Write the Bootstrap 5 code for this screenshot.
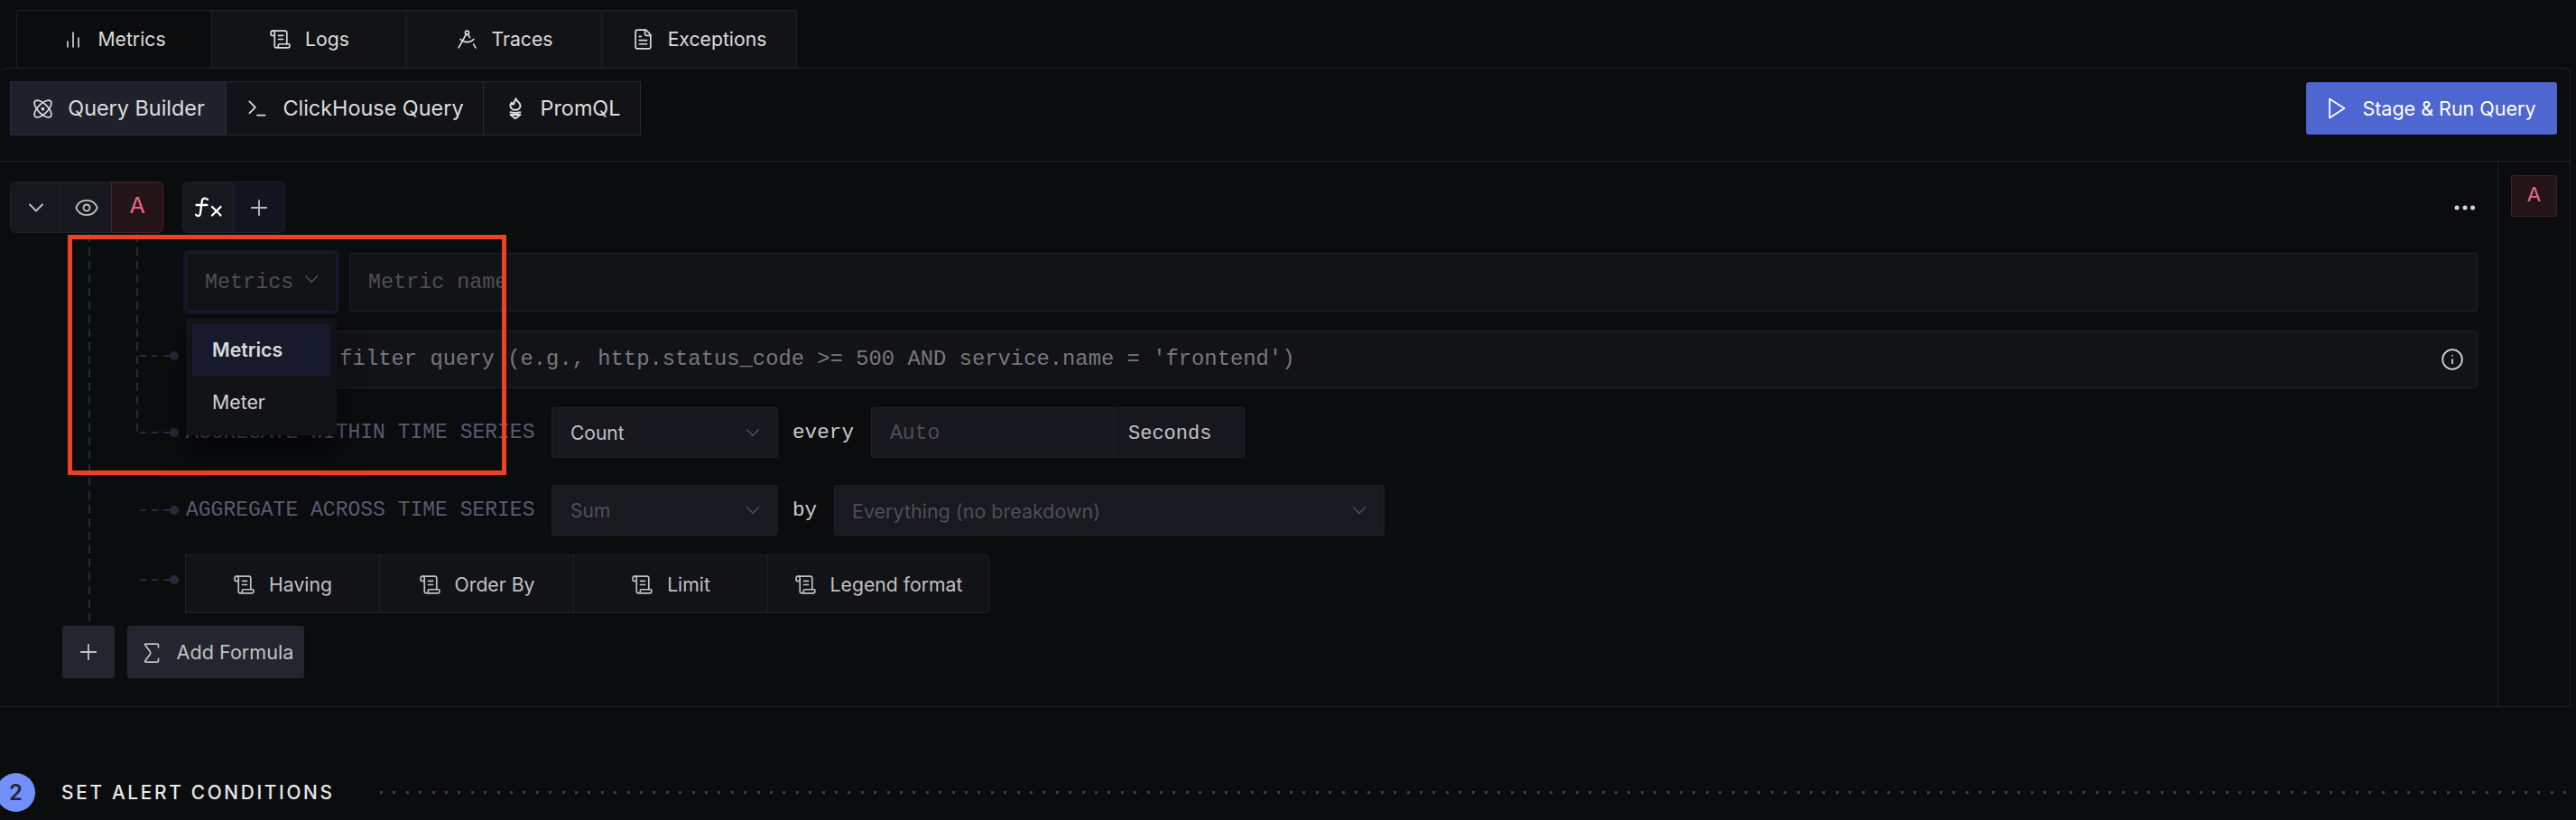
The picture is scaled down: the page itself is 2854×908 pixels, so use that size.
<!DOCTYPE html>
<html lang="en"><head><meta charset="utf-8"><title>Query</title>
<link href="https://cdn.jsdelivr.net/npm/bootstrap@5.3.0/dist/css/bootstrap.min.css" rel="stylesheet">
<style>
html,body{background:#0b0c0e;margin:0;height:908px;overflow:hidden}
body{font-family:"Inter","Liberation Sans",sans-serif;color:#c0c1c3;font-size:21px}
svg.ic{fill:none;stroke:currentColor;stroke-width:1.6;stroke-linecap:round;stroke-linejoin:round;flex:none}
svg.thin{stroke-width:1.1}
.page{position:relative;height:908px;overflow:hidden}
.tab-strip{padding:11px 0 0 18px;height:75px}
.tab-btn{width:216px;height:64px;background:#121317;border:1px solid #1d212d;border-bottom:0;border-left:0;border-radius:0;color:#dcdcdc;font-size:21.2px;gap:15px;padding:0}
.tab-btn:first-child{background:#0b0c0e;border-left:1px solid #1d212d;border-top-left-radius:3px;width:217px}
.tab-btn:last-child{border-top-right-radius:3px}
.qpanel{width:2848px;height:708px;border:1px solid #1d212d;border-left:0;border-radius:8px 8px 0 0}
.tool-row{height:103px;padding:14px 14px 0 11px;border-bottom:1px solid #1d212d}
.mode-btn{height:60px;background:#121317;border:1px solid #262a3a;border-radius:0;color:#dcdcdc;font-size:23.4px;gap:15px;padding:0;margin-left:-1px}
.mode-btn:first-child{margin-left:0;background:#1e212c;width:240px}
.mode-two{width:286px}.mode-three{width:175px}
.stage-btn{width:278px;height:58px;margin-top:1px;background:#4e67d0;border:0;border-radius:3px;color:#fff;font-size:21.5px;gap:15px;padding:0 4px 0 0}
.body-row{height:603px}
.query-col{position:relative;width:2767px;padding-top:22px;flex:none}
.side-col{flex:1;border-left:1px solid #1d212d;padding:15px 0 0 14px}
.letter-side{width:51px;height:46px;background:#231417;border:1px solid #45202a;border-radius:3px;color:#e4688a;font-family:"Liberation Mono",monospace;font-size:24px}
.head-row{padding-left:11px;height:57px;margin-bottom:22px;gap:21px}
.ico-btn{width:57px;height:57px;background:#16181d;border:1px solid #1d212d;border-radius:0;color:#c0c1c3;padding:0;margin-left:-1px}
.ico-group .ico-btn:first-child{margin-left:0;border-radius:6px 0 0 6px}
.ico-group .ico-btn:last-child{border-radius:0 6px 6px 0}
.letter-btn{width:58px;background:#231417;border-color:#45202a;color:#e4688a;font-family:"Liberation Mono",monospace;font-size:27px}
.fx-btn{color:#fff}.plus-btn{width:58px;background:#121520;color:#b5b7bb}
.more-dots{margin-left:auto;margin-right:24px;color:#d5d6d8}
.q-row{position:relative;margin-left:206px;margin-right:22px}
.gap-a{margin-bottom:21px}.gap-b{margin-bottom:30px}.gap-c{margin-bottom:14px}
.mono{font-family:"Liberation Mono",monospace;font-size:23.4px}
.fld{background:#121317;border:1px solid #1d212d;border-radius:3px;color:#4e4f53;height:65px;padding:2px 20px 0}
.fld-filter{height:64px;width:100%;padding:0 14px 0 12px;color:#77787c;justify-content:space-between;font-size:23.83px}
.fld-filter svg{color:#d8d9db}
.metric-sel{width:167px;outline:3px solid #131828;padding:2px 14px 0 20px;justify-content:space-between;position:relative}
.metric-sel svg{margin-top:-10px;color:#55565a}
.metric-name{flex:1;margin-left:14px}
.drop-menu{position:absolute;display:block;left:0;top:72px;min-width:0;width:167px;height:130px;margin:0;padding:7px;background:#121317;border:0;border-radius:3px;box-shadow:0 18px 30px rgba(0,0,0,.55);z-index:5}
.drop-menu .dropdown-item{height:58px;display:flex;align-items:center;padding:0 15px 0 22px;font-size:21.3px;color:#d0d1d3;border-radius:3px;background:transparent}
.drop-menu .dropdown-item.active{background:#161a2c;color:#d8d9db;font-weight:600}
.drop-menu .item-two{height:57px}
.agg-label{width:405px;color:#565c70;font-size:23px;font-family:"Liberation Mono",monospace;white-space:nowrap;flex:none;padding-top:1px}
.sel-box{width:251px;height:56px;background:#16181d;border:1px solid #1d212d;border-radius:3px;padding:2px 14px 0 20px;justify-content:space-between;font-size:21px;color:#c0c1c3}
.sel-box svg{color:#55565a;margin-top:-2px}
.sel-dim{color:#4e4f53;background:#181a20}
.joiner-text{color:#c8c9cb;padding:1px 0 0 16px;font-family:"Liberation Mono",monospace;font-size:22.7px}
.joiner-every{width:103px}.joiner-by{width:62px}
.auto-box{width:269px;height:56px;background:#16181d;border:1px solid #1d212d;border-radius:3px 0 0 3px;padding:2px 20px 0;color:#4e4f53;font-family:"Liberation Mono",monospace;font-size:23px}
.unit-box{width:145px;height:56px;background:#16181d;border:1px solid #1d212d;border-left:0;border-radius:0 3px 3px 0;padding:2px 16px 0;font-family:"Liberation Mono",monospace;font-size:22px;color:#c0c1c3}
.wide-sel{width:610px;font-size:21.5px;padding-left:19px}
.extra-btn{width:216px;height:65px;background:#121317;border:1px solid #1d212d;border-radius:0;margin-left:-1px;color:#c0c1c3;font-size:21.2px;gap:15px;padding:2px 0 0}
.extra-btn:first-child{margin-left:0;border-radius:3px 0 0 3px}
.extra-btn:last-child{border-radius:0 3px 3px 0;width:246px}
.add-row{padding-left:69px;gap:14px}
.add-btn{height:58px;width:58px;background:#23262e;border:0;border-radius:3px;color:#c0c1c3;padding:0}
.formula-btn{width:196px;gap:13px;font-size:21.6px;padding:1px 0 0}
.rail{position:absolute;width:2px;background:repeating-linear-gradient(to bottom,#262a3a 0 9px,transparent 9px 15px)}
.rail-a{left:98px;top:80px;height:432px}
.rail-b{left:151px;top:80px;height:220px}
.conn{position:absolute;left:-51px;top:27px;width:38px;height:2px;background:repeating-linear-gradient(to right,#262a3a 0 7px,transparent 7px 13px)}
.conn::after{content:"";position:absolute;right:-5px;top:-4px;width:10px;height:10px;border-radius:50%;background:#262a3a}
.step-row{margin-top:73px;height:43px}
.step-num{width:43px;height:43px;border-radius:50%;background:#7190f9;color:#23263a;font-weight:600;margin-left:-4px;font-size:24px;flex:none}
.step-title{margin-left:29px;font-size:20.8px;font-weight:500;letter-spacing:2.7px;color:#e8e8e8;white-space:nowrap}
.step-dots{flex:1;margin-left:50px;height:3px;background:repeating-linear-gradient(to right,#3a3d47 0 3px,transparent 3px 14.4px)}
.annot{position:absolute;left:75px;top:260px;width:486px;height:266px;border:5px solid #ee4025;z-index:9;pointer-events:none}
</style></head><body>
<svg width="0" height="0" class="position-absolute"><defs>
<symbol id="i-scroll" viewBox="0 0 24 24"><path d="M15 12h-5"/><path d="M15 8h-5"/><path d="M19 17V5a2 2 0 0 0-2-2H4"/><path d="M8 21h12a2 2 0 0 0 2-2v-1a1 1 0 0 0-1-1H11a1 1 0 0 0-1 1v1a2 2 0 1 1-4 0V5a2 2 0 1 0-4 0v2a1 1 0 0 0 1 1h3"/></symbol>
<symbol id="i-chev" viewBox="0 0 24 24"><path d="m6 9 6 6 6-6"/></symbol>
<symbol id="i-plus" viewBox="0 0 24 24"><path d="M5 12h14"/><path d="M12 5v14"/></symbol>
</defs></svg>
<main class="page">
<div class="d-flex tab-strip">
<button class="btn tab-btn d-flex align-items-center justify-content-center"><svg class="ic" width="24" height="24" viewBox="0 0 24 24"><line x1="18" x2="18" y1="20" y2="10"/><line x1="12" x2="12" y1="20" y2="4"/><line x1="6" x2="6" y1="20" y2="14"/></svg>Metrics</button>
<button class="btn tab-btn d-flex align-items-center justify-content-center"><svg class="ic" width="25" height="25"><use href="#i-scroll"/></svg>Logs</button>
<button class="btn tab-btn d-flex align-items-center justify-content-center"><svg class="ic" width="25" height="25" viewBox="0 0 24 24"><path d="m12.99 6.74 1.93 3.44"/><path d="M19.136 12a10 10 0 0 1-14.271 0"/><path d="m21 21-2.16-3.84"/><path d="m3 21 8.02-14.26"/><circle cx="12" cy="5" r="2"/></svg>Traces</button>
<button class="btn tab-btn d-flex align-items-center justify-content-center"><svg class="ic" width="25" height="25" viewBox="0 0 24 24"><path d="M15 2H6a2 2 0 0 0-2 2v16a2 2 0 0 0 2 2h12a2 2 0 0 0 2-2V7Z"/><path d="M14 2v4a2 2 0 0 0 2 2h4"/><path d="M10 9H8"/><path d="M16 13H8"/><path d="M16 17H8"/></svg>Exceptions</button>
</div>
<section class="qpanel">
<div class="d-flex justify-content-between align-items-start tool-row">
<div class="d-flex">
<button class="btn mode-btn d-flex align-items-center justify-content-center"><svg class="ic" width="25" height="25" viewBox="0 0 24 24"><circle cx="12" cy="12" r="1"/><path d="M20.2 20.2c2.04-2.03.02-7.36-4.5-11.9-4.54-4.52-9.87-6.54-11.9-4.5-2.04 2.03-.02 7.36 4.5 11.9 4.54 4.52 9.87 6.54 11.9 4.5Z"/><path d="M15.7 15.7c4.52-4.54 6.54-9.87 4.5-11.9-2.03-2.04-7.36-.02-11.9 4.5-4.52 4.54-6.54 9.87-4.5 11.9 2.03 2.04 7.36.02 11.9-4.5Z"/></svg>Query Builder</button>
<button class="btn mode-btn mode-two d-flex align-items-center justify-content-center"><svg class="ic" width="26" height="26" viewBox="0 0 24 24"><polyline points="4 17 10 11 4 5"/><line x1="12" x2="20" y1="19" y2="19"/></svg>ClickHouse Query</button>
<button class="btn mode-btn mode-three d-flex align-items-center justify-content-center"><svg class="ic" width="26" height="26" viewBox="0 0 24 24" style="stroke-width:1.9"><path d="M12.5 2c.3 2.4 4.6 3.6 4.6 7.2 0 2.6-2.2 4.3-5.1 4.3s-5.1-1.7-5.1-4.3c0-1.4.7-2.4 1.5-3.2.2 1.2 1 1.9 1.7 1.9.8-1.8 1.3-3.9 2.4-5.9Z"/><path d="M7 16c3 .8 7 .8 10 0"/><path d="M7 18.4h10l-5 4Z"/></svg>PromQL</button>
</div>
<button class="btn stage-btn d-flex align-items-center justify-content-center"><svg class="ic" width="28" height="28" viewBox="0 0 24 24" style="stroke-width:1.5"><polygon points="6 3 20 12 6 21 6 3"/></svg>Stage &amp; Run Query</button>
</div>
<div class="d-flex body-row">
<div class="query-col">
<div class="rail rail-a"></div><div class="rail rail-b"></div>
<div class="d-flex align-items-center head-row">
<div class="d-flex ico-group">
<button class="btn ico-btn d-flex align-items-center justify-content-center"><svg class="ic" width="28" height="28"><use href="#i-chev"/></svg></button>
<button class="btn ico-btn d-flex align-items-center justify-content-center"><svg class="ic" width="28" height="28" viewBox="0 0 24 24"><path d="M2.062 12.348a1 1 0 0 1 0-.696 10.75 10.75 0 0 1 19.876 0 1 1 0 0 1 0 .696 10.75 10.75 0 0 1-19.876 0"/><circle cx="12" cy="12" r="3"/></svg></button>
<button class="btn ico-btn letter-btn d-flex align-items-center justify-content-center">A</button>
</div>
<div class="d-flex ico-group">
<button class="btn ico-btn fx-btn d-flex align-items-center justify-content-center"><svg class="ic" width="34" height="24" viewBox="0 0 34 24" style="stroke-width:2.3"><path d="M16 3C14 .8 10.3 1 9.800 4.500L8 18c-.5 3.600-3.400 4-5 1.600"/><path d="M3.500 9h12"/><path d="m21 11 9.500 9.500"/><path d="M30.500 11 21 20.500"/></svg></button>
<button class="btn ico-btn plus-btn d-flex align-items-center justify-content-center"><svg class="ic" width="28" height="28"><use href="#i-plus"/></svg></button>
</div>
<svg class="more-dots" width="24" height="6" viewBox="0 0 24 6" fill="currentColor"><circle cx="3" cy="3" r="2.5"/><circle cx="12" cy="3" r="2.5"/><circle cx="20.500" cy="3" r="2.5"/></svg>
</div>
<div class="q-row d-flex gap-a">
<div class="dropdown">
<div class="fld metric-sel mono d-flex align-items-center">Metrics<svg class="ic thin" width="26" height="26"><use href="#i-chev"/></svg></div>
<ul class="dropdown-menu show drop-menu list-unstyled">
<li><a class="dropdown-item active" href="#">Metrics</a></li>
<li><a class="dropdown-item item-two" href="#">Meter</a></li>
</ul>
</div>
<div class="fld metric-name mono d-flex align-items-center">Metric name</div>
</div>
<div class="q-row gap-a"><span class="conn"></span>
<div class="fld fld-filter mono d-flex align-items-center"><span>Enter your filter query (e.g., http.status_code &gt;= 500 AND service.name = 'frontend')</span>
<svg class="ic" width="26" height="26" viewBox="0 0 24 24"><circle cx="12" cy="12" r="10"/><path d="M12 16v-4"/><path d="M12 8h.01"/></svg></div>
</div>
<div class="q-row d-flex align-items-center gap-b"><span class="conn"></span>
<div class="agg-label">AGGREGATE WITHIN TIME SERIES</div>
<div class="sel-box d-flex align-items-center">Count<svg class="ic thin" width="26" height="26"><use href="#i-chev"/></svg></div>
<div class="joiner-text joiner-every">every</div>
<div class="auto-box d-flex align-items-center">Auto</div>
<div class="unit-box d-flex align-items-center">Seconds</div>
</div>
<div class="q-row d-flex align-items-center gap-a"><span class="conn"></span>
<div class="agg-label">AGGREGATE ACROSS TIME SERIES</div>
<div class="sel-box sel-dim d-flex align-items-center">Sum<svg class="ic thin" width="26" height="26"><use href="#i-chev"/></svg></div>
<div class="joiner-text joiner-by">by</div>
<div class="sel-box sel-dim wide-sel d-flex align-items-center">Everything (no breakdown)<svg class="ic thin" width="26" height="26"><use href="#i-chev"/></svg></div>
</div>
<div class="q-row d-flex gap-c"><span class="conn"></span>
<button class="btn extra-btn d-flex align-items-center justify-content-center"><svg class="ic" width="25" height="25"><use href="#i-scroll"/></svg>Having</button>
<button class="btn extra-btn d-flex align-items-center justify-content-center"><svg class="ic" width="25" height="25"><use href="#i-scroll"/></svg>Order By</button>
<button class="btn extra-btn d-flex align-items-center justify-content-center"><svg class="ic" width="25" height="25"><use href="#i-scroll"/></svg>Limit</button>
<button class="btn extra-btn d-flex align-items-center justify-content-center"><svg class="ic" width="25" height="25"><use href="#i-scroll"/></svg>Legend format</button>
</div>
<div class="d-flex add-row">
<button class="btn add-btn d-flex align-items-center justify-content-center"><svg class="ic" width="28" height="28"><use href="#i-plus"/></svg></button>
<button class="btn add-btn formula-btn d-flex align-items-center justify-content-center"><svg class="ic" width="30" height="30" viewBox="0 0 24 24" style="stroke-width:1.4"><path d="M18 7V5a1 1 0 0 0-1-1H6.500a.5.5 0 0 0-.4.8l4.500 6a2 2 0 0 1 0 2.400l-4.500 6a.5.5 0 0 0 .4.8H17a1 1 0 0 0 1-1v-2"/></svg>Add Formula</button>
</div>
</div>
<aside class="side-col"><div class="letter-side d-flex align-items-center justify-content-center">A</div></aside>
</div>
</section>
<div class="d-flex align-items-center step-row">
<div class="step-num d-flex align-items-center justify-content-center">2</div>
<div class="step-title">SET ALERT CONDITIONS</div>
<div class="step-dots"></div>
</div>
<div class="annot"></div>
</main>
<script src="https://cdn.jsdelivr.net/npm/bootstrap@5.3.0/dist/js/bootstrap.bundle.min.js"></script>
</body></html>
